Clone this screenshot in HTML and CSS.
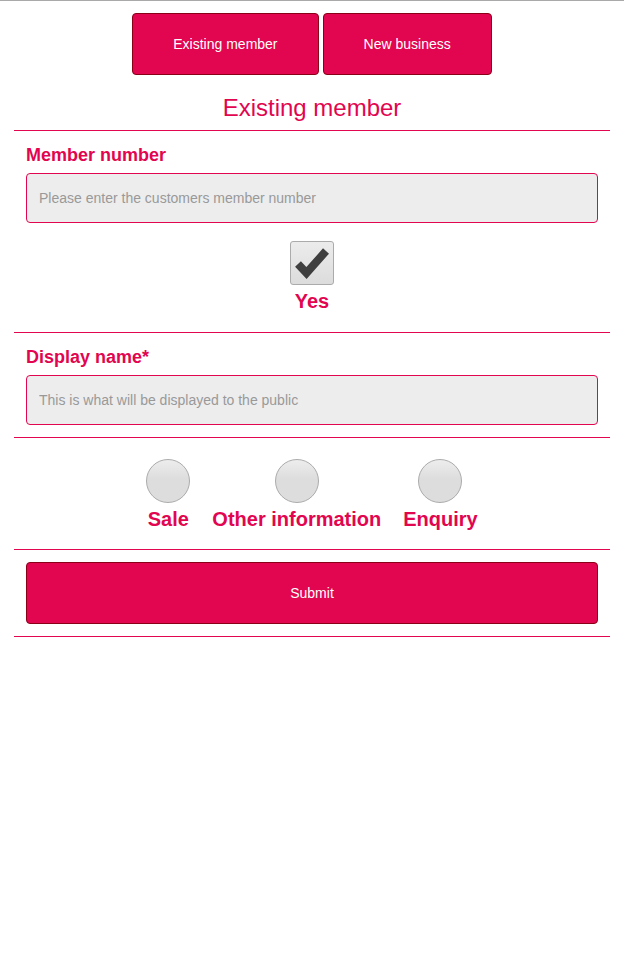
FILE: index.html
```html
<!DOCTYPE html>
<html lang="en">
<head>
  <meta charset="UTF-8">
  <meta name="viewport" content="width=device-width, initial-scale=1.0">
  <title>Existing member</title>
  <link rel="stylesheet" href="styles.css">
</head>
<body>
  <div class="page">
    <div class="section header">
      <div class="tabs">
        <button class="btn">Existing member</button>
        <button class="btn">New business</button>
      </div>
      <h1 class="page-title">Existing member</h1>
    </div>

    <div class="section">
      <label class="field-label" for="memberNumber">Member number</label>
      <input type="text" class="field-input" id="memberNumber" placeholder="Please enter the customers member number">
      <div class="check-wrap">
        <span class="check-box">
          <svg width="44" height="44" viewBox="0 0 44 44">
            <path d="M8 23 L16.5 32 L36 10" fill="none" stroke="#3f3f3f" stroke-width="8" stroke-linejoin="miter"/>
          </svg>
        </span>
        <span class="choice-label">Yes</span>
      </div>
    </div>

    <div class="section">
      <label class="field-label" for="displayName">Display name*</label>
      <input type="text" class="field-input" id="displayName" placeholder="This is what will be displayed to the public">
    </div>

    <div class="section radios">
      <div class="radio-item">
        <span class="radio"></span>
        <span class="choice-label">Sale</span>
      </div>
      <div class="radio-item">
        <span class="radio"></span>
        <span class="choice-label">Other information</span>
      </div>
      <div class="radio-item">
        <span class="radio"></span>
        <span class="choice-label">Enquiry</span>
      </div>
    </div>

    <div class="section submit-row">
      <button class="btn submit-btn">Submit</button>
    </div>
  </div>
</body>
</html>
```

FILE: styles.css
```css
body {
  margin: 0;
  font-family: "Liberation Sans", Arial, sans-serif;
  background: #fff;
  border-top: 1px solid #a9a9a9;
}

.page {
  padding: 0 14px;
}

.section {
  border-bottom: 1px solid #e2054f;
  padding: 13px 12px 12px;
}

.header {
  padding: 12px 0 8px;
}

.tabs {
  display: flex;
  justify-content: center;
  gap: 4px;
}

.btn {
  background: #e2054f;
  color: #fff;
  border: 1px solid #8a0016;
  border-radius: 4px;
  height: 62px;
  padding: 0 40px;
  font-family: inherit;
  font-size: 14px;
  cursor: pointer;
}

.page-title {
  margin: 19px 0 0;
  font-size: 24px;
  line-height: 28px;
  font-weight: normal;
  color: #e2054f;
  text-align: center;
}

.field-label {
  display: block;
  font-size: 18px;
  line-height: 22px;
  font-weight: bold;
  color: #e2054f;
  margin-bottom: 7px;
}

.field-input {
  display: block;
  box-sizing: border-box;
  width: 100%;
  height: 50px;
  padding: 0 12px;
  border: 1px solid #e2054f;
  border-radius: 4px;
  background: #ededed;
  font-family: inherit;
  font-size: 14px;
  color: #333;
  outline: none;
}

.field-input::placeholder {
  color: #999;
}

.check-wrap {
  display: flex;
  flex-direction: column;
  align-items: center;
  margin-top: 18px;
  padding-bottom: 7px;
}

.check-box {
  box-sizing: border-box;
  width: 44px;
  height: 44px;
  border: 1px solid #ababab;
  border-radius: 3px;
  background: linear-gradient(#ececec, #dcdcdc);
  display: block;
}

.check-box svg {
  display: block;
  margin: -1px;
}

.choice-label {
  display: block;
  margin-top: 4px;
  font-size: 20px;
  line-height: 24px;
  font-weight: bold;
  color: #e2054f;
}

.radios {
  display: flex;
  justify-content: center;
  gap: 22px;
  padding: 21px 12px 18px;
}

.radio-item {
  display: flex;
  flex-direction: column;
  align-items: center;
}

.radio {
  display: block;
  box-sizing: border-box;
  width: 44px;
  height: 44px;
  border-radius: 50%;
  border: 1px solid #ababab;
  background: linear-gradient(#ededed 0%, #dddddd 45%, #dddddd 100%);
}

.submit-row {
  padding: 12px;
}

.submit-btn {
  display: block;
  width: 100%;
}
```
